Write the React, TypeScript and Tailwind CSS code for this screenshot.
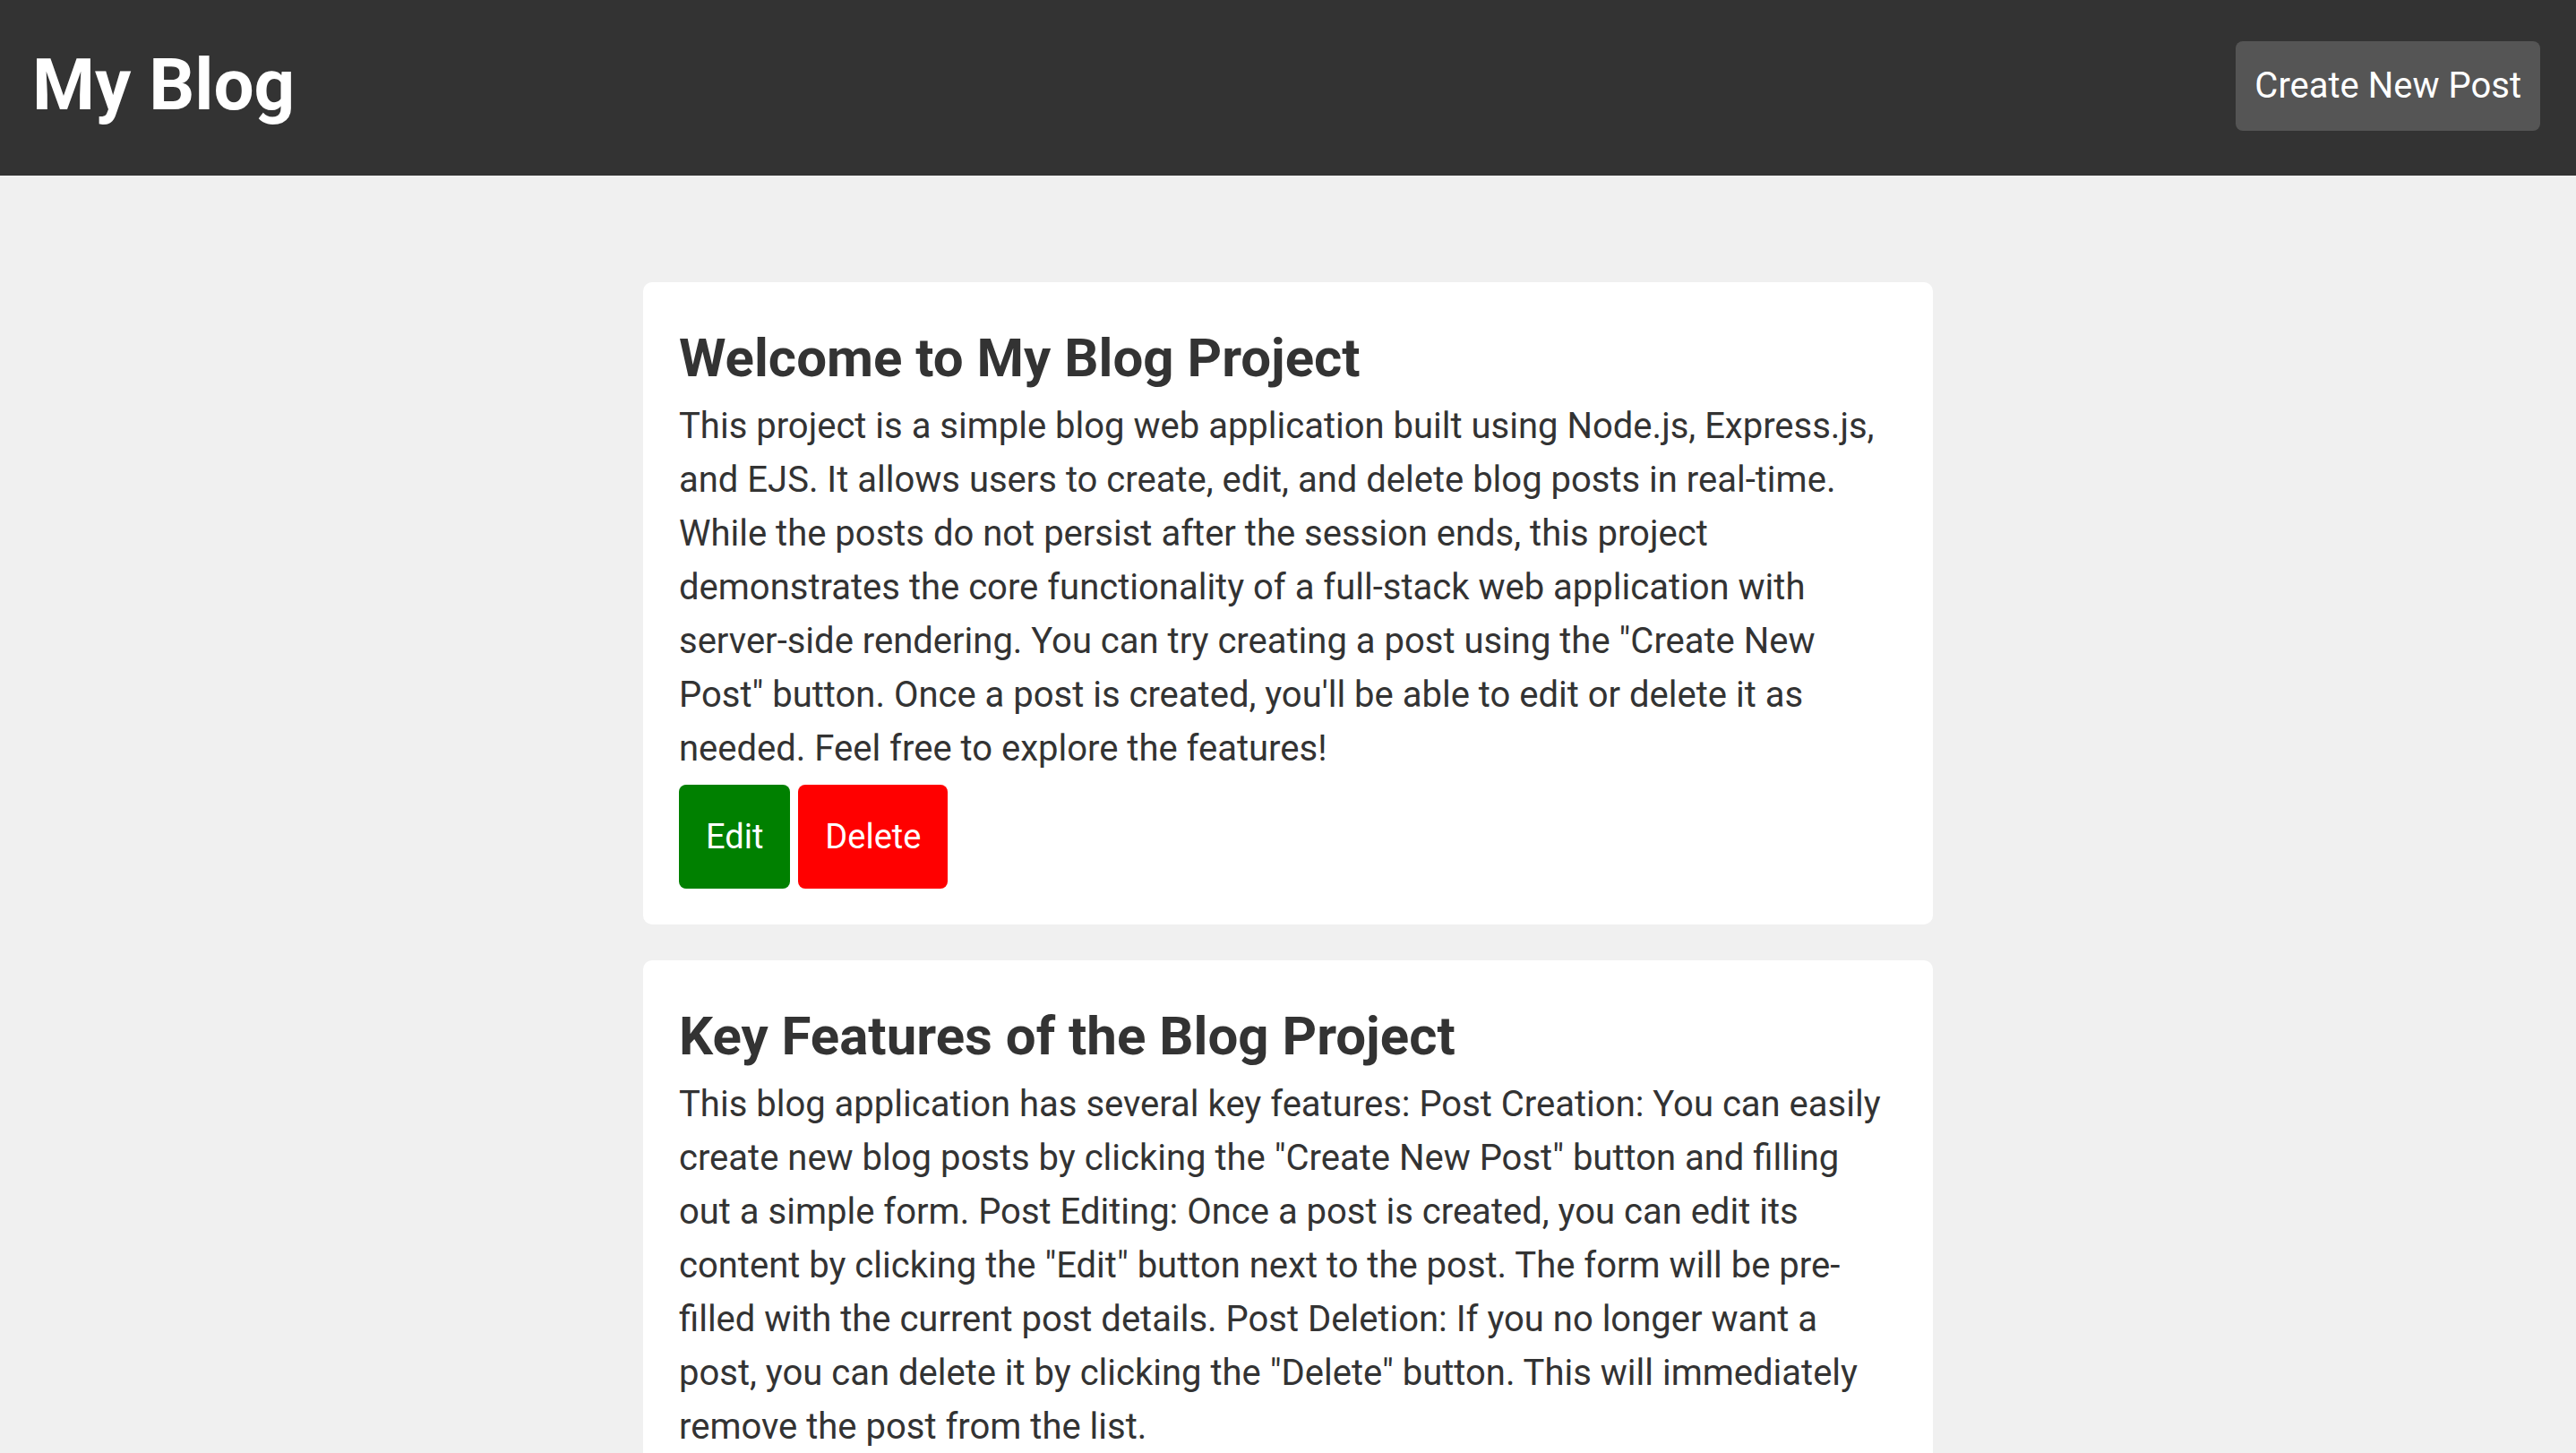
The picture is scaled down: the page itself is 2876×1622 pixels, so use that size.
import React from 'react';

interface Post {
  title: string;
  body: string;
}

const posts: Post[] = [
  {
    title: 'Welcome to My Blog Project',
    body:
      'This project is a simple blog web application built using Node.js, Express.js, and EJS. It allows users to create, edit, and delete blog posts in real-time. While the posts do not persist after the session ends, this project demonstrates the core functionality of a full-stack web application with server-side rendering. You can try creating a post using the "Create New Post" button. Once a post is created, you\'ll be able to edit or delete it as needed. Feel free to explore the features!',
  },
  {
    title: 'Key Features of the Blog Project',
    body:
      'This blog application has several key features: Post Creation: You can easily create new blog posts by clicking the "Create New Post" button and filling out a simple form. Post Editing: Once a post is created, you can edit its content by clicking the "Edit" button next to the post. The form will be pre-filled with the current post details. Post Deletion: If you no longer want a post, you can delete it by clicking the "Delete" button. This will immediately remove the post from the list.',
  },
];

const PostCard = ({ post }: { post: Post }) => (
  <article className="bg-white rounded-[10px] px-[40px] pt-[50px] pb-[40px]">
    <h2 className="text-[60px] leading-[70px] font-bold text-[#333]">{post.title}</h2>
    <p className="mt-[11px] text-[40px] leading-[60px] text-[#333]">{post.body}</p>
    {/* Actions */}
    <div className="flex gap-[9px] mt-[10px]">
      <button className="h-[116px] px-[30px] rounded-[8px] bg-[#008000] text-white text-[38px]">
        Edit
      </button>
      <button className="h-[116px] px-[30px] rounded-[8px] bg-[#ff0000] text-white text-[38px]">
        Delete
      </button>
    </div>
  </article>
);

export default function App() {
  return (
    <div className="min-h-screen bg-[#f0f0f0] font-['Roboto',sans-serif]">
      {/* Header */}
      <header className="h-[196px] bg-[#333] flex items-center justify-between pl-[36px] pr-[40px]">
        <h1 className="mb-[7px] text-[80px] font-bold text-white leading-none">My Blog</h1>
        <button className="h-[100px] px-[21px] -mt-[4px] rounded-[8px] bg-[#555] text-white text-[40px]">
          Create New Post
        </button>
      </header>

      {/* Posts */}
      <main className="w-[1440px] mx-auto pt-[119px] pb-[40px] flex flex-col gap-[40px]">
        {posts.map((post) => (
          <PostCard key={post.title} post={post} />
        ))}
      </main>
    </div>
  );
}
